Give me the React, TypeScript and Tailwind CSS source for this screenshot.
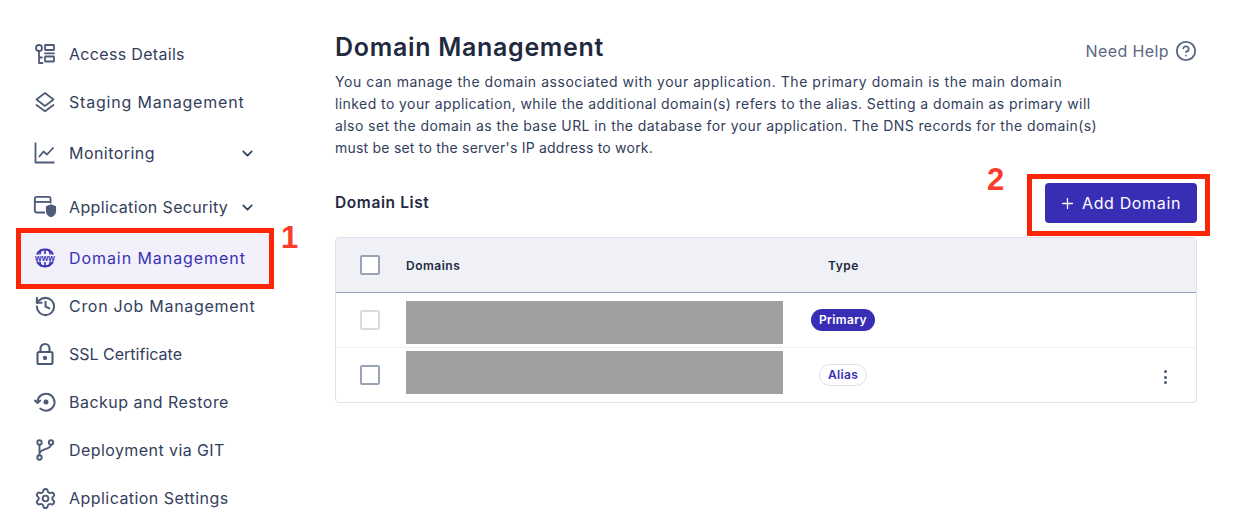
import { ChevronDown, Plus, CircleHelp, History, Settings } from 'lucide-react';

const iconProps = {
  width: 24,
  height: 24,
  viewBox: '0 0 24 24',
  fill: 'none',
  stroke: 'currentColor',
  strokeWidth: 2,
  strokeLinecap: 'round' as const,
  strokeLinejoin: 'round' as const,
};

function AccessIcon() {
  return (
    <svg {...iconProps} strokeWidth={1.8}>
      <circle cx="6" cy="6" r="3" />
      <path d="M6 9v12h3.500M6 15.500h3" />
      <rect x="12" y="3" width="9" height="5" rx="0.5" />
      <rect x="12" y="14.500" width="9" height="5" rx="0.5" />
      <path d="M12 11.300h9" />
    </svg>
  );
}

function LayersIcon() {
  return (
    <svg {...iconProps} strokeWidth={1.7}>
      <path d="M12 3l8.500 6.500-8.500 6.500-8.500-6.500z" />
      <path d="M3.500 15l8.500 6.300 8.500-6.300" />
    </svg>
  );
}

function ChartIcon() {
  return (
    <svg {...iconProps} strokeWidth={1.8} strokeLinecap="butt">
      <path d="M2.500 1.500v20h19" />
      <path d="M6 16l4.500-5.500 3.500 3 6.500-7" />
    </svg>
  );
}

function WindowShieldIcon() {
  return (
    <svg width="26" height="24" viewBox="0 0 26 24" fill="none">
      <path d="M13 18H4a2 2 0 0 1-2-2V3a2 2 0 0 1 2-2h13a2 2 0 0 1 2 2v5" stroke="currentColor" strokeWidth="2" />
      <path d="M2 6.500h17" stroke="currentColor" strokeWidth="2" />
      <path d="M19.500 9l5.500 2.200v5c0 3.500-2.400 5.800-5.500 7-3.100-1.200-5.500-3.500-5.500-7v-5z" fill="currentColor" />
    </svg>
  );
}

function WwwIcon() {
  return (
    <svg width="24" height="24" viewBox="0 0 24 24" fill="none">
      <path d="M4 8.500a9 9 0 0 1 16 0M4 15.500a9 9 0 0 0 16 0" stroke="currentColor" strokeWidth="2" />
      <path d="M12 3v5M12 16v5M8.500 3.500C7.500 5 7 6.500 6.800 8.500M15.500 3.500C16.500 5 17 6.500 17.200 8.500M8.500 20.500C7.500 19 7 17.500 6.800 15.500M15.500 20.500c1-1.500 1.500-3 1.700-5" stroke="currentColor" strokeWidth="1.600" />
      <text x="12" y="14.600" textAnchor="middle" fontSize="8.500" fontWeight="700" fill="currentColor" fontFamily="Liberation Sans, sans-serif">www</text>
    </svg>
  );
}

function LockIcon() {
  return (
    <svg {...iconProps} strokeWidth={2.100}>
      <rect x="4.500" y="10" width="15" height="12" rx="1.500" />
      <path d="M7.500 10V6.500a4.500 4.500 0 0 1 9 0V10" />
      <circle cx="12" cy="16" r="1.100" fill="currentColor" />
    </svg>
  );
}

function RestoreIcon() {
  return (
    <svg {...iconProps} strokeWidth={2}>
      <path d="M4.500 12a8.500 8.500 0 1 1 2.800 6.500" />
      <path d="M2 10.500l2.500 2.500 2.700-2.500" />
      <circle cx="13" cy="12" r="1.500" fill="currentColor" />
    </svg>
  );
}

function BranchIcon() {
  return (
    <svg {...iconProps} strokeWidth={1.900}>
      <circle cx="6.500" cy="4.500" r="2.200" />
      <circle cx="6.500" cy="19.500" r="2.200" />
      <circle cx="18" cy="4.500" r="2.200" />
      <path d="M6.500 6.700v10.600M18 6.700c0 5-11.500 4-11.500 9" />
    </svg>
  );
}

// tracking per label: Inter runs narrower than the reference face, and not evenly
const navItems = [
  { label: 'Access Details', icon: <AccessIcon />, rowClass: 'h-12', track: 'tracking-[0.32px]' },
  { label: 'Staging Management', icon: <LayersIcon />, rowClass: 'h-12', track: 'tracking-[0.8px]' },
  { label: 'Monitoring', icon: <ChartIcon />, rowClass: 'h-[54px]', track: 'tracking-[0.45px]', chevron: true },
  { label: 'Application Security', icon: <WindowShieldIcon />, rowClass: 'h-[54px]', track: 'tracking-[0.35px]', chevron: true },
  { label: 'Domain Management', icon: <WwwIcon />, rowClass: 'h-[52px] -my-0.5', track: 'tracking-[0.93px]', active: true },
  { label: 'Cron Job Management', icon: <History size={23} strokeWidth={2.100} />, rowClass: 'h-12', track: 'tracking-[0.7px]' },
  { label: 'SSL Certificate', icon: <LockIcon />, rowClass: 'h-12', track: 'tracking-[0px]' },
  { label: 'Backup and Restore', icon: <RestoreIcon />, rowClass: 'h-12', track: 'tracking-[0.47px]' },
  { label: 'Deployment via GIT', icon: <BranchIcon />, rowClass: 'h-12', track: 'tracking-[0.42px]' },
  { label: 'Application Settings', icon: <Settings size={23} strokeWidth={2} />, rowClass: 'h-12', track: 'tracking-[0.45px]' },
];

function Sidebar() {
  return (
    <aside className="w-[335px] shrink-0 pt-[30px] pl-[21px]">
      <nav className="w-[249px]">
        {navItems.map((item) => (
          <div
            key={item.label}
            className={`${item.rowClass} flex items-center ${item.active ? 'bg-[#f2f1fb] text-[#3a31b5]' : 'text-[#33405c]'}`}
          >
            <span className={`flex w-6 ml-3 justify-center shrink-0 ${item.active ? 'text-[#3a31b5]' : 'text-[#4d5a78]'}`}>
              {item.icon}
            </span>
            <span className={`ml-3 text-[16px] whitespace-nowrap ${item.track}`}>{item.label}</span>
            {item.chevron && <ChevronDown size={17} strokeWidth={2.400} className="absolute left-[239px] text-[#33405c]" />}
          </div>
        ))}
      </nav>
    </aside>
  );
}

function Checkbox({ muted }: { muted?: boolean }) {
  return (
    <span className={`block w-5 h-5 rounded-[2px] border-2 bg-white ${muted ? 'border-[#d9dbdf]' : 'border-[#9aa3b5]'}`} />
  );
}

function DomainRow({ children, last }: { children: React.ReactNode; last?: boolean }) {
  return (
    <div className={`flex items-center ${last ? 'h-[54px]' : 'h-[55px] border-b border-[#f0f1f4]'}`}>
      {children}
    </div>
  );
}

export default function App() {
  return (
    <div className="relative flex h-[521px] w-[1260px] overflow-hidden bg-white font-['Inter','Liberation_Sans',sans-serif]">
      <Sidebar />
      <main className="w-[862px] shrink-0 pt-[31px]">
        <div className="flex items-center justify-between h-[34px]">
          <h1 className="text-[25px] font-semibold tracking-[0.7px] text-[#1f2a3f]">Domain Management</h1>
          <div className="flex items-center gap-1.5 text-[#5b6780] mt-[5px]">
            <span className="text-[16px] tracking-[0.4px]">Need Help</span>
            <CircleHelp size={22} strokeWidth={2} />
          </div>
        </div>
        <p className="mt-[6px] whitespace-nowrap text-[14px] leading-[22px] text-[#33405c]">
          <span className="block tracking-[0.55px]">You can manage the domain associated with your application. The primary domain is the main domain</span>
          <span className="block tracking-[0.42px]">linked to your application, while the additional domain(s) refers to the alias. Setting a domain as primary will</span>
          <span className="block tracking-[0.42px]">also set the domain as the base URL in the database for your application. The DNS records for the domain(s)</span>
          <span className="block tracking-[0.22px]">must be set to the server's IP address to work.</span>
        </p>
        <div className="mt-[24px] flex items-center justify-between h-10">
          <h2 className="text-[15.5px] font-semibold tracking-[0.6px] text-[#1f2a3f]">Domain List</h2>
          <button className="flex h-10 w-[152px] items-center justify-center gap-1.5 rounded-[4px] bg-[#382eb5] pr-0.5 text-[16px] tracking-[0.65px] text-white">
            <Plus size={17} strokeWidth={1.800} />
            <span>Add Domain</span>
          </button>
        </div>
        <section className="mt-[14px] rounded-[4px] border border-[#dfe1e6]">
          <div className="flex h-[55px] items-center rounded-t-[4px] border-b border-[#98a2b8] bg-[#f0f1f6] text-[12px] font-semibold tracking-[0.5px] text-[#1f2a3f]">
            <span className="ml-6 w-[46px]"><Checkbox /></span>
            <span className="w-[422px] pt-0.5">Domains</span>
            <span className="pt-0.5">Type</span>
          </div>
          <DomainRow>
            <span className="ml-6 w-[46px]"><Checkbox muted /></span>
            <span className="mt-[5px] h-[43px] w-[377px] bg-[#a0a0a0]" />
            <span className="ml-7 flex h-[22px] w-16 items-center justify-center rounded-full bg-[#382eb5] text-[12px] font-semibold tracking-[0.35px] text-white">Primary</span>
          </DomainRow>
          <DomainRow last>
            <span className="ml-6 w-[46px]"><Checkbox /></span>
            <span className="h-[43px] w-[377px] mt-[-6px] bg-[#a0a0a0]" />
            <span className="ml-9 flex h-[22px] w-12 items-center justify-center rounded-full border border-[#dfe1e6] text-[12px] font-semibold tracking-[0.35px] text-[#3a31b5]">Alias</span>
            <span className="ml-auto mr-[29px] mt-1 flex flex-col gap-[2.500px]">
              <i className="block h-[3px] w-[3px] rounded-full bg-[#4d5a78]" />
              <i className="block h-[3px] w-[3px] rounded-full bg-[#4d5a78]" />
              <i className="block h-[3px] w-[3px] rounded-full bg-[#4d5a78]" />
            </span>
          </DomainRow>
        </section>
      </main>

      {/* red annotations drawn over the screenshot */}
      <div className="absolute left-[16px] top-[228px] h-[61px] w-[258px] border-[5px] border-[#fb2508]" />
      <div className="absolute left-[1027px] top-[174px] h-[62px] w-[183px] border-[5px] border-[#fb2508]" />
      <span className="absolute left-[281px] top-[220px] text-[31px] font-bold leading-[36px] text-[#fb3b2c] font-['Liberation_Sans',sans-serif]">1</span>
      <span className="absolute left-[987px] top-[162px] text-[31px] font-bold leading-[36px] text-[#fb3b2c] font-['Liberation_Sans',sans-serif]">2</span>
    </div>
  );
}
